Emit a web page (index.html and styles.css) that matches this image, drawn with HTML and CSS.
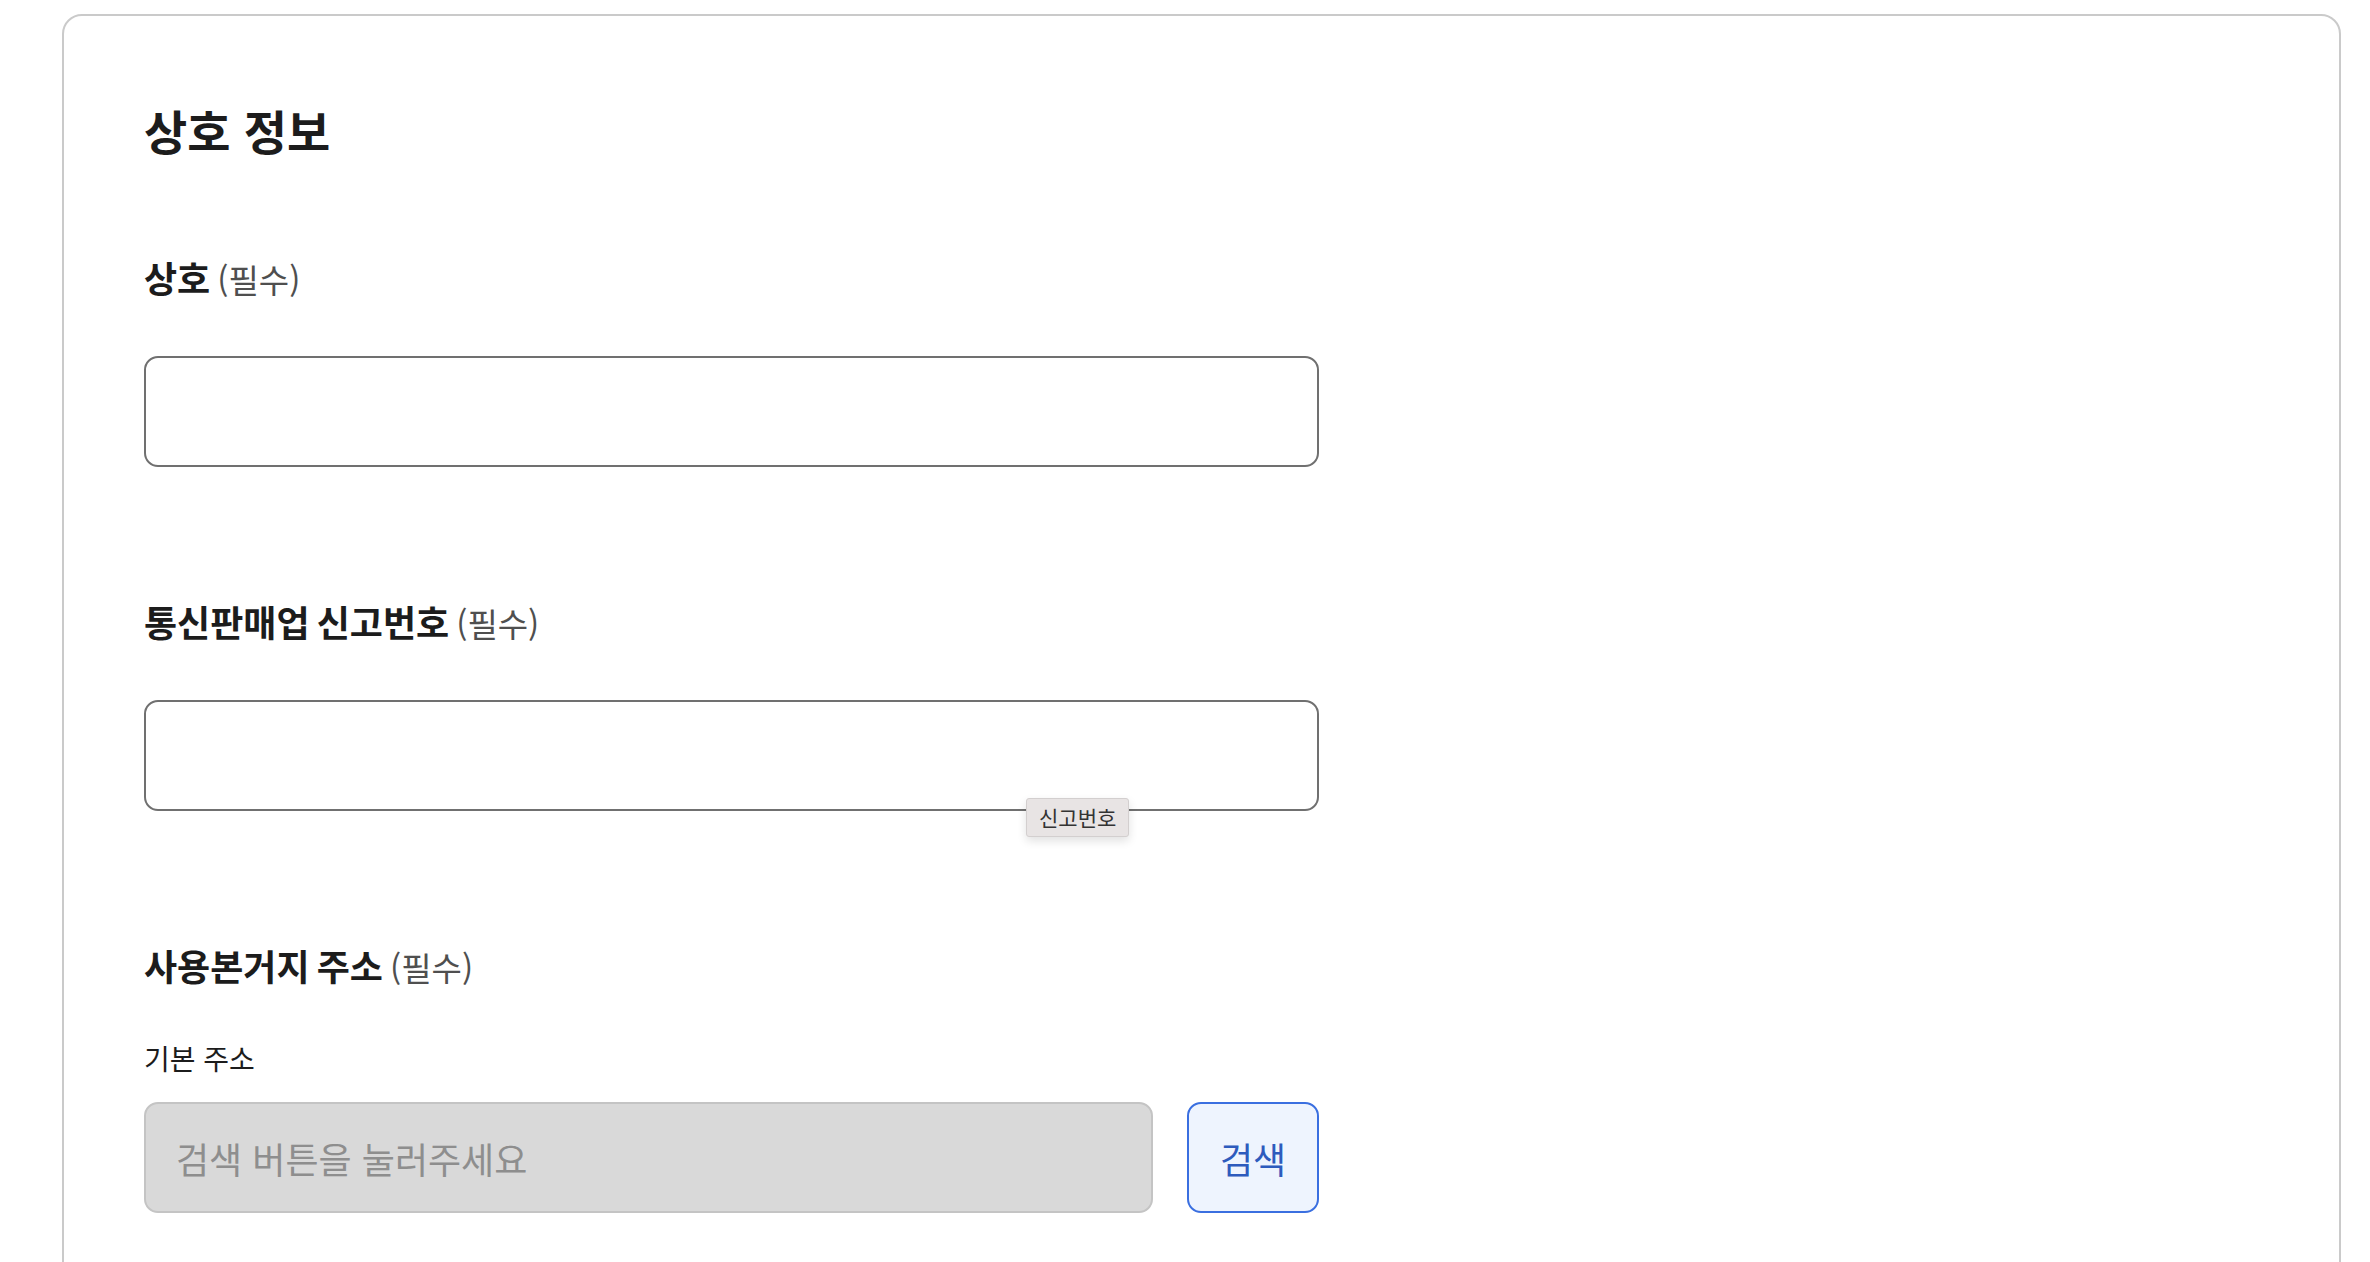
FILE: index.html
```html
<!DOCTYPE html>
<html lang="ko">
<head>
<meta charset="UTF-8">
<meta name="viewport" content="width=device-width, initial-scale=1.0">
<title>상호 정보</title>
<link rel="stylesheet" href="styles.css">
</head>
<body>
<div class="card">
  <h2 class="card-title">상호 정보</h2>

  <div class="field">
    <label class="field-label" for="bizName">상호 <span class="req">(필수)</span></label>
    <input type="text" id="bizName" class="text-input">
  </div>

  <div class="field">
    <label class="field-label" for="reportNo">통신판매업 신고번호 <span class="req">(필수)</span></label>
    <div class="input-wrap">
      <input type="text" id="reportNo" class="text-input">
      <span class="tooltip">신고번호</span>
    </div>
  </div>

  <div class="field">
    <div class="field-label">사용본거지 주소 <span class="req">(필수)</span></div>
    <label class="sub-label" for="addr">기본 주소</label>
    <div class="addr-row">
      <input type="text" id="addr" class="text-input disabled" placeholder="검색 버튼을 눌러주세요" disabled>
      <button type="button" class="search-btn">검색</button>
    </div>
  </div>
</div>
</body>
</html>
```

FILE: styles.css
```css
body {
  font-family: "Noto Sans CJK KR", "Noto Sans", sans-serif;
  margin: 0;
  padding: 0;
  background-color: #fff;
  color: #1c1c1c;
}
.card {
  margin: 14px 0 0 62px;
  width: 2115px;
  min-height: 1400px;
  padding: 90px 80px 0;
  border: 2px solid #cacaca;
  border-radius: 20px;
}
.card-title {
  margin: 0;
  font-size: 47px;
  line-height: 47px;
  font-weight: 700;
}
.field {
  width: 1175px;
  margin-top: 106px;
}
.field + .field {
  margin-top: 136px;
}
.field-label {
  display: block;
  font-size: 36px;
  line-height: 36px;
  font-weight: 700;
  word-spacing: -3px;
  margin-bottom: 60px;
}
.req {
  font-size: 33px;
  line-height: 1;
  font-weight: 400;
  color: #4f4f4f;
}
.input-wrap {
  position: relative;
}
.text-input {
  display: block;
  width: 100%;
  height: 111px;
  box-sizing: border-box;
  border: 2px solid #707070;
  border-radius: 14px;
  padding: 0 30px;
  font-family: inherit;
  font-size: 36px;
  background: #fff;
}
.tooltip {
  position: absolute;
  left: 882px;
  top: 98px;
  padding: 0 12px;
  height: 37px;
  line-height: 37px;
  font-size: 21px;
  color: #333;
  background: #e8e4e4;
  border: 1px solid #d3cfcf;
  border-radius: 3px;
  box-shadow: 0 4px 10px rgba(0, 0, 0, 0.12);
}
.sub-label {
  display: block;
  font-size: 28px;
  line-height: 28px;
  margin: 2px 0 30px;
}
.addr-row {
  display: flex;
  gap: 34px;
}
.text-input.disabled {
  flex: 1;
  background: #d9d9d9;
  border-color: #c4c4c4;
}
.text-input.disabled::placeholder {
  color: #8e8e8e;
}
.search-btn {
  width: 132px;
  height: 111px;
  flex: none;
  border: 2px solid #3a6fe0;
  border-radius: 14px;
  background: #eef4fe;
  color: #2d5bbd;
  font-family: inherit;
  font-size: 36px;
}
```
